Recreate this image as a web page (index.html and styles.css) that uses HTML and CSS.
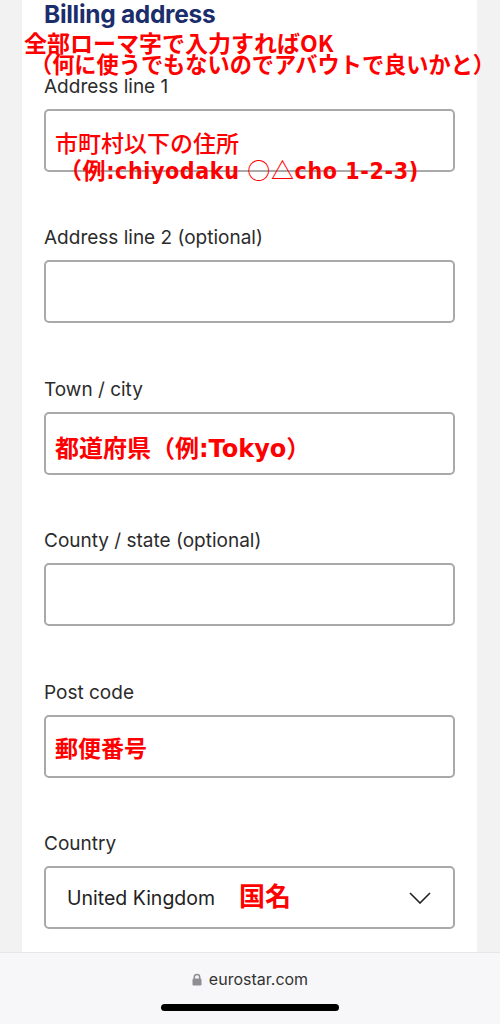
FILE: index.html
```html
<!DOCTYPE html>
<html lang="ja">
<head>
  <meta charset="UTF-8">
  <meta name="viewport" content="width=device-width, initial-scale=1.0">
  <title>Billing address</title>
  <link rel="stylesheet" href="styles.css">
</head>
<body>
  <div class="screen">
    <main class="panel">
      <h2 class="panel-title">Billing address</h2>
      <p class="note">
        <span class="note-line">全部ローマ字で入力すればOK</span>
        <span class="note-line note-sub">（何に使うでもないのでアバウトで良いかと）</span>
      </p>

      <div class="field">
        <label class="field-label">Address line 1</label>
        <div class="field-box">
          <span class="hint hint-address">市町村以下の住所</span>
          <span class="hint hint-address hint-indent">（例:chiyodaku <span class="shape">○△</span>cho 1-2-3)</span>
        </div>
      </div>
      <div class="field">
        <label class="field-label">Address line 2 (optional)</label>
        <div class="field-box"></div>
      </div>
      <div class="field">
        <label class="field-label">Town / city</label>
        <div class="field-box">
          <span class="hint hint-town">都道府県（例:Tokyo）</span>
        </div>
      </div>
      <div class="field">
        <label class="field-label">County / state (optional)</label>
        <div class="field-box"></div>
      </div>
      <div class="field">
        <label class="field-label">Post code</label>
        <div class="field-box">
          <span class="hint hint-post">郵便番号</span>
        </div>
      </div>
      <div class="field">
        <label class="field-label">Country</label>
        <div class="field-box select-box">
          <span class="select-value">United Kingdom</span>
          <span class="hint hint-country">国名</span>
          <svg class="chevron" width="22" height="12" viewBox="0 0 22 12">
            <path d="M1 1l10 10L21 1" fill="none" stroke="#222" stroke-width="1.6"/>
          </svg>
        </div>
      </div>
    </main>

    <footer class="browser-bar">
      <div class="url">
        <svg width="10" height="13" viewBox="0 0 10 13">
          <path d="M2.3 6V4.2a2.7 2.7 0 0 1 5.4 0V6" fill="none" stroke="#8e8e93" stroke-width="1.5"/>
          <rect x="0.5" y="5.6" width="9" height="7" rx="1.4" fill="#8e8e93"/>
        </svg>
        eurostar.com
      </div>
      <div class="home-indicator"></div>
    </footer>
  </div>
</body>
</html>
```

FILE: styles.css
```css
body {
  margin: 0;
  background-color: #f2f2f2;
  font-family: Inter, "Noto Sans CJK JP", sans-serif;
  color: #2b2b2b;
}

.screen {
  display: flex;
  flex-direction: column;
  height: 1024px;
  overflow: hidden;
}

.panel {
  flex: 1;
  min-height: 0;
  margin: 0 23px 0 22px;
  padding: 0 22px;
  background: #fff;
}

.panel-title {
  margin: 0;
  font-size: 24.5px;
  line-height: 28px;
  font-weight: 700;
  color: #1b2d6b;
  letter-spacing: -0.3px;
}

/* red annotations written over the screenshot */
.note {
  margin: 4px 0 1.5px -20px;
  font-family: "Noto Sans CJK JP", sans-serif;
  font-weight: 700;
  color: #f00;
  white-space: nowrap;
}

.note-line {
  display: block;
  font-size: 23px;
  line-height: 21px;
}

.note-sub {
  margin-left: 6px;
  font-size: 22.2px;
}

.field {
  margin-bottom: 55.5px;
}

.field-label {
  display: block;
  margin-bottom: 11px;
  font-size: 19px;
  line-height: 22px;
  color: #2b2b2b;
}

.field-box {
  box-sizing: border-box;
  height: 63px;
  padding: 21px 9px 0;
  border: 2px solid #a9a9a9;
  border-radius: 5px;
  white-space: nowrap;
}

.hint {
  display: block;
  font-family: "DejaVu Sans", "Noto Sans CJK JP", sans-serif;
  font-size: 24px;
  line-height: 25px;
  font-weight: 700;
  color: #f00;
}

.hint-address {
  font-family: "DejaVu Sans Condensed", "DejaVu Sans", "Noto Sans CJK JP", sans-serif;
  font-size: 23px;
  font-weight: 500;
}

.hint-indent {
  margin-left: 4px;
  font-weight: 700;
  letter-spacing: 0.6px;
}

.shape {
  font-family: "Noto Sans CJK JP", sans-serif;
  font-weight: 500;
}

.hint-town {
  margin-top: 2px;
}

.hint-post {
  margin-top: -1px;
  font-size: 23px;
}

.select-box {
  display: flex;
  align-items: center;
  padding: 0 22px 0 21px;
}

.select-value {
  font-size: 19.5px;
  color: #222;
}

.hint-country {
  margin-left: 24px;
  font-size: 26px;
}

.chevron {
  margin-left: auto;
}

.browser-bar {
  box-sizing: border-box;
  flex-shrink: 0;
  height: 72px;
  background: #f7f7f9;
  border-top: 1px solid #e6e6e8;
  display: flex;
  flex-direction: column;
  align-items: center;
}

.url {
  display: flex;
  align-items: center;
  gap: 7px;
  margin-top: 16px;
  font-size: 16px;
  color: #333;
}

.home-indicator {
  width: 178px;
  height: 7px;
  margin-top: 15px;
  border-radius: 4px;
  background: #000;
}
```
